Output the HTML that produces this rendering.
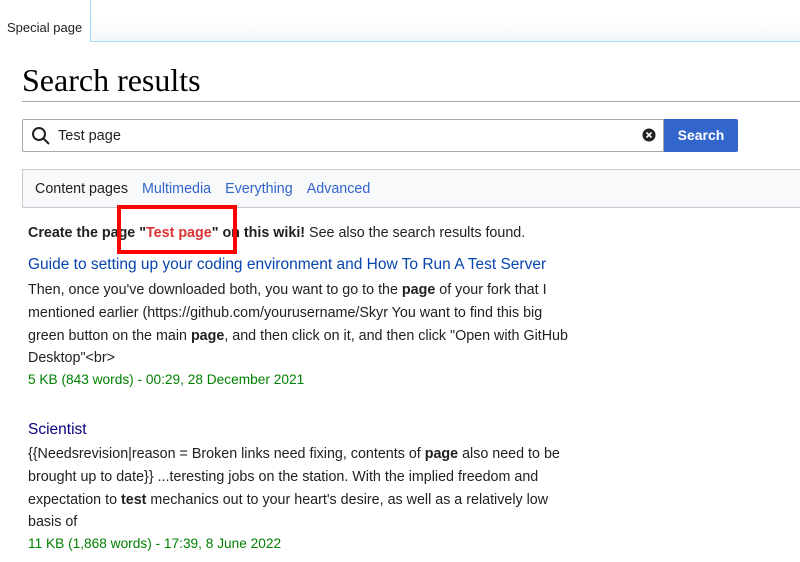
<!DOCTYPE html>
<html><head><style>
body{margin:0;width:800px;height:562px;overflow:hidden;background:#fff;font-family:"Liberation Sans",sans-serif;color:#202122;position:relative}
.a{position:absolute}
.tabbar{left:0;top:0;width:800px;height:41px;background:linear-gradient(#fff 0%,#fff 40%,#f3f6fa 100%)}
.tab{left:0;top:0;width:90px;height:42px;background:#fff;border-right:1px solid #a7d7f9;font-size:13px}
.line{left:91px;top:41px;width:709px;height:1px;background:#a7d7f9}
h1{position:absolute;left:22px;top:62px;margin:0;font-family:"Liberation Serif",serif;font-weight:normal;font-size:32px;color:#000}
.hr{left:22px;top:101px;width:778px;height:1px;background:#a2a9b1}
.inp{left:22px;top:119px;width:640px;height:31px;border:1px solid #a2a9b1;border-radius:2px 0 0 2px}
.btn{left:664px;top:119px;width:74px;height:33px;background:#3366cc;border-radius:0 2px 2px 0;color:#fff;font-weight:bold;font-size:14px;text-align:center;line-height:33px}
.tabs{left:22px;top:169px;width:778px;height:37px;background:#f8f9fa;border:1px solid #c8ccd1;border-right:none;font-size:14.3px;line-height:38px}
.tabs span{margin-left:12px}.tabs .l{color:#3366cc}
.t{font-size:14.3px;left:28px;white-space:nowrap}
.s{font-size:14.3px;left:28px;white-space:nowrap;line-height:22.8px}
.ti{font-size:15.5px;left:28px;color:#0645ad}
.g{color:#008000;font-size:13.7px;left:28px}
</style></head><body>
<div class="a tabbar"></div>
<div class="a tab"><div class="a" style="left:7px;top:20px">Special page</div></div>
<div class="a line"></div>
<h1>Search results</h1>
<div class="a hr"></div>
<div class="a inp">
<svg class="a" style="left:8px;top:6px" width="20" height="20" viewBox="0 0 20 20"><circle cx="8" cy="8" r="6" fill="none" stroke="#202122" stroke-width="2"/><line x1="12.5" y1="12.5" x2="18" y2="18" stroke="#202122" stroke-width="2"/></svg>
<div class="a" style="left:35px;top:8px;font-size:14.5px">Test page</div>
<svg class="a" style="left:619px;top:8px" width="14" height="14" viewBox="0 0 14 14"><circle cx="7" cy="7" r="6.5" fill="#202122"/><path d="M4.5 4.5L9.5 9.5M9.5 4.5L4.5 9.5" stroke="#fff" stroke-width="1.6"/></svg>
</div>
<div class="a btn">Search</div>
<div class="a tabs"><span>Content pages</span><span class="l" style="margin-left:14px">Multimedia</span><span class="l" style="margin-left:14px">Everything</span><span class="l" style="margin-left:14px">Advanced</span></div>
<div class="a t" style="top:225px"><b>Create the page "<span style="color:#d33">Test page</span>" on this wiki!</b> See also the search results found.</div>
<div class="a" style="left:117px;top:205px;width:112px;height:41px;border:4px solid #f00"></div>
<div class="a ti" style="top:256px">Guide to setting up your coding environment and How To Run A Test Server</div>
<div class="a s" style="top:279px">Then, once you've downloaded both, you want to go to the <b>page</b> of your fork that I<br>mentioned earlier (https://github.com/yourusername/Skyr You want to find this big<br>green button on the main <b>page</b>, and then click on it, and then click "Open with GitHub<br>Desktop"&lt;br&gt;</div>
<div class="a g" style="top:372px">5 KB (843 words) - 00:29, 28 December 2021</div>
<div class="a ti" style="top:421px;color:#0b0080">Scientist</div>
<div class="a s" style="top:443px">{{Needsrevision|reason = Broken links need fixing, contents of <b>page</b> also need to be<br>brought up to date}} ...teresting jobs on the station. With the implied freedom and<br>expectation to <b>test</b> mechanics out to your heart's desire, as well as a relatively low<br>basis of</div>
<div class="a g" style="top:536px">11 KB (1,868 words) - 17:39, 8 June 2022</div>
</body></html>
